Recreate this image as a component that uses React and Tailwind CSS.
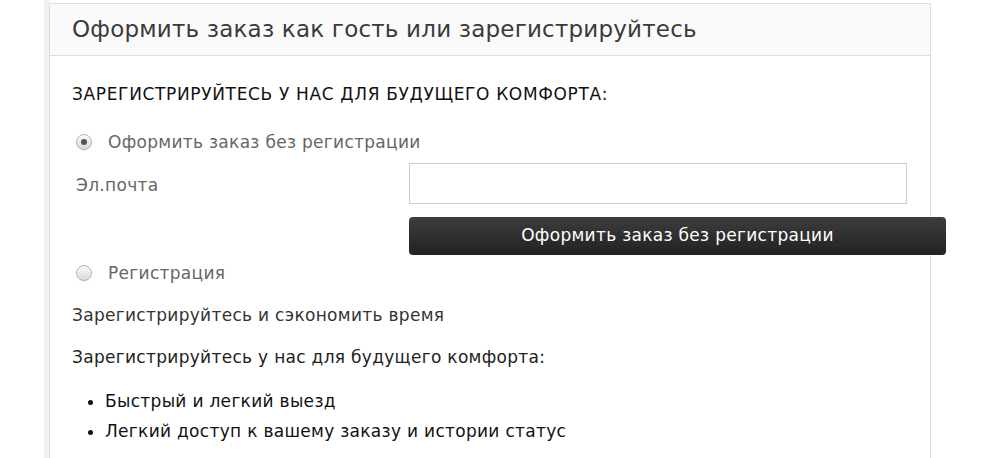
export default function App() {
  return (
    <div className="w-[1000px] h-[458px] bg-white overflow-hidden relative" style={{ fontFamily: '"DejaVu Sans", "Liberation Sans", sans-serif' }}>
      <div className="flex h-full">
        <div className="w-[44px] shrink-0" />
        <div className="w-[5px] shrink-0 bg-[#f1f1f1]" />
        <div className="w-[882px] shrink-0 mt-[3px] border border-[#dddddd] h-[470px]">
          <div className="h-[52px] bg-[#fafafa] border-b border-[#dddddd] pl-[22px] flex items-center">
            <h1 className="text-[23px] tracking-[0.2px] text-[#3a3a3a] leading-none">Оформить заказ как гость или зарегистрируйтесь</h1>
          </div>
          <div className="pl-[22px] pt-[26px] text-[17px] tracking-[0.3px]">
            <div className="text-[#111] leading-[24px] tracking-[0.65px]">ЗАРЕГИСТРИРУЙТЕСЬ У НАС ДЛЯ БУДУЩЕГО КОМФОРТА:</div>
            <div className="mt-[24px] flex items-center pl-[4px] h-[24px]">
              <span className="w-[16px] h-[16px] rounded-full border border-[#b5b5b5] bg-gradient-to-b from-[#fafafa] to-[#d8d8d8] shadow-[0_1px_1px_rgba(0,0,0,0.08)] flex items-center justify-center">
                <span className="w-[6px] h-[6px] rounded-full bg-[#555]" />
              </span>
              <span className="ml-[16px] text-[#666] leading-[24px]">Оформить заказ без регистрации</span>
            </div>
            <div className="mt-[9px] flex items-start">
              <div className="w-[337px] shrink-0 pl-[4px] pt-[10px] text-[#666] leading-[24px]">Эл.почта</div>
              <div className="flex flex-col shrink-0">
                <div className="w-[498px] h-[41px] border border-[#cccccc] bg-white" />
                <button className="mt-[13px] w-[537px] h-[38px] rounded-[4px] bg-gradient-to-b from-[#3d3d3d] to-[#222222] text-white flex items-center justify-center tracking-[0.3px]">Оформить заказ без регистрации</button>
              </div>
            </div>
            <div className="mt-[6px] flex items-center pl-[4px] h-[24px]">
              <span className="w-[16px] h-[16px] rounded-full border border-[#b5b5b5] bg-gradient-to-b from-[#fafafa] to-[#d8d8d8] shadow-[0_1px_1px_rgba(0,0,0,0.08)]" />
              <span className="ml-[16px] text-[#666] leading-[24px]">Регистрация</span>
            </div>
            <div className="mt-[18px] text-[#333] leading-[24px]">Зарегистрируйтесь и сэкономить время</div>
            <div className="mt-[18px] text-[#222] leading-[24px]">Зарегистрируйтесь у нас для будущего комфорта:</div>
            <ul className="mt-[17px] list-disc pl-[33px] text-[#111] leading-[30px]">
              <li>Быстрый и легкий выезд</li>
              <li>Легкий доступ к вашему заказу и истории статус</li>
            </ul>
          </div>
        </div>
      </div>
    </div>
  );
}
